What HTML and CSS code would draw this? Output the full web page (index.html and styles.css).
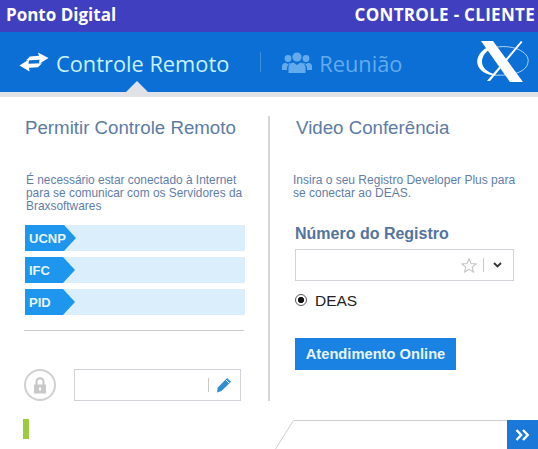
FILE: index.html
```html
<!DOCTYPE html>
<html lang="en">

<head>
    <meta charset="UTF-8">
    <meta name="viewport" content="width=device-width, initial-scale=1.0">
    <title>Ponto Digital</title>
    <link rel="stylesheet" href="styles.css">
</head>

<body>
    <header class="topbar">
        <span>Ponto Digital</span>
        <span class="topbar-right">CONTROLE - CLIENTE</span>
    </header>

    <nav class="nav">
        <svg class="nav-swap" width="30" height="20" viewBox="0 0 30 20">
            <path fill="#fff" d="M29.5 6 L19 0.5 L20 3.8 L11 4.4 L7 8.4 L20.5 7.8 L20 12 Z" />
            <path fill="#fff" d="M0.5 13.5 L10.5 19.5 L10 15.8 L19 15.2 L23 11.2 L9.5 11.8 L10 7.5 Z" />
        </svg>
        <span class="nav-item">Controle Remoto</span>
        <span class="nav-sep"></span>
        <svg class="nav-users" width="30" height="21" viewBox="0 0 30 21">
            <g fill="#64abee">
                <circle cx="15" cy="5" r="4.6" />
                <path d="M6.5 21 L6.5 15.5 Q6.5 11.5 11.5 10.5 L15 13 L18.5 10.5 Q23.5 11.5 23.5 15.5 L23.5 21 Z" />
                <circle cx="6" cy="6.5" r="3.4" />
                <path d="M0 18 L0 14.5 Q0 11.5 3.5 10.8 L6 12 L8.5 10.8 L9.5 11 Q5 12.5 5 16 L5 18 Z" />
                <circle cx="24" cy="6.5" r="3.4" />
                <path d="M30 18 L30 14.5 Q30 11.5 26.5 10.8 L24 12 L21.5 10.8 L20.5 11 Q25 12.5 25 16 L25 18 Z" />
            </g>
        </svg>
        <span class="nav-item nav-item-off">Reunião</span>
        <svg class="nav-logo" width="70" height="60" viewBox="0 0 70 60">
            <path fill="none" stroke="#a9d6f7" stroke-width="1" d="M24 16 C44 11 62 20 60 30 C59 40 44 44 30 43" />
            <path fill="#fff" d="M20 15 C10 20 6 30 12 37 C16 42 24 44 32 43.5 C22 42 14 37 14 30 C14 24 18 19 23 17 Z" />
            <path fill="#fff" d="M13 9 L25 9 L55 50 L42 50 Z" />
            <path fill="#fff" d="M53 9 L54.5 10 L22 49 L19 49 Z" />
        </svg>
    </nav>

    <div class="strip">
        <span class="strip-arrow"></span>
    </div>

    <main class="main">
        <section class="col col-left">
            <h2 class="title">Permitir Controle Remoto</h2>
            <p class="intro">É necessário estar conectado à Internet para se comunicar com os Servidores da Braxsoftwares</p>
            <div class="tag-row"><span class="tag tag-wide">UCNP</span></div>
            <div class="tag-row"><span class="tag">IFC</span></div>
            <div class="tag-row"><span class="tag">PID</span></div>
            <hr class="rule">
            <div class="lock-row">
                <span class="lock">
                    <svg width="14" height="17" viewBox="0 0 14 17">
                        <path fill="none" stroke="#c8c8c8" stroke-width="2" d="M3.5 8 L3.5 5 Q3.5 1.2 7 1.2 Q10.5 1.2 10.5 5 L10.5 8" />
                        <path fill="#c8c8c8" d="M1 7.5 L13 7.5 L13 16.5 L1 16.5 Z M6 10.5 L6 13.5 L8 13.5 L8 10.5 Z" fill-rule="evenodd" />
                    </svg>
                </span>
                <div class="box box-pass">
                    <span class="box-sep"></span>
                    <svg width="16" height="16" viewBox="0 0 16 16">
                        <path fill="#2f8fd0" d="M11 1 L15 4.8 L5.5 14 L1 15.5 L1.8 10.5 Z" />
                        <path stroke="#fff" stroke-width="1" d="M9.6 2.6 L13.4 6.4" />
                    </svg>
                </div>
            </div>
        </section>

        <section class="col col-right">
            <h2 class="title">Video Conferência</h2>
            <p class="intro">Insira o seu Registro Developer Plus para se conectar ao DEAS.</p>
            <label class="field-label">Número do Registro</label>
            <div class="box box-reg">
                <svg width="16" height="15" viewBox="0 0 16 15">
                    <path fill="none" stroke="#c4c4c4" stroke-width="1.1" d="M8 1 L10 5.6 L15 6 L11.2 9.2 L12.4 14 L8 11.4 L3.6 14 L4.8 9.2 L1 6 L6 5.6 Z" />
                </svg>
                <span class="box-sep"></span>
                <svg width="9" height="6" viewBox="0 0 9 6">
                    <path fill="none" stroke="#333" stroke-width="1.8" d="M1 1 L4.5 4.5 L8 1" />
                </svg>
            </div>
            <div class="radio-row">
                <span class="radio"></span>
                <span class="radio-text">DEAS</span>
            </div>
            <button class="btn-online">Atendimento Online</button>
        </section>
    </main>

    <footer class="footer">
        <span class="status"></span>
        <svg class="footer-slant" width="19" height="29" viewBox="0 0 19 29">
            <path fill="none" stroke="#cfcfcf" d="M18.5 0.5 L0.5 29" />
        </svg>
        <span class="footer-line"></span>
        <span class="footer-next">
            <svg width="15" height="12" viewBox="0 0 15 12">
                <path fill="none" stroke="#fff" stroke-width="2.4" d="M1.5 1 L6.2 6 L1.5 11 M8 1 L12.7 6 L8 11" />
            </svg>
        </span>
    </footer>
</body>

</html>
```
FILE: styles.css
```css
* {
    box-sizing: border-box;
}

body {
    font-family: "Liberation Sans", Arial, sans-serif;
    background-color: #fff;
    margin: 0;
    padding: 0;
    width: 538px;
    height: 449px;
    overflow: hidden;
}

.topbar {
    display: flex;
    justify-content: space-between;
    align-items: center;
    height: 32px;
    padding: 0 3px 4px 6px;
    background-color: #3f3fbf;
    color: #fff;
    font-family: "Open Sans", sans-serif;
    font-size: 17px;
    font-weight: 700;
}

.topbar-right {
    letter-spacing: 0.3px;
}

.nav {
    display: flex;
    align-items: center;
    height: 60px;
    padding-left: 19px;
    background-color: #0b6fd6;
}

.nav-swap {
    margin-right: 7px;
}

.nav-item {
    padding-top: 2px;
    font-family: "Open Sans", sans-serif;
    font-size: 21.8px;
    color: #c8f2ff;
}

.nav-item-off {
    color: #64abee;
}

.nav-sep {
    width: 1px;
    height: 20px;
    margin: 0 21px 0 31px;
    background-color: #3f8fe0;
}

.nav-users {
    margin-right: 7px;
}

.nav-logo {
    margin-left: auto;
}

.strip {
    position: relative;
    height: 5px;
    background-color: #dfe3e8;
}

.strip-arrow {
    position: absolute;
    left: 126px;
    top: -11px;
    border-left: 11px solid transparent;
    border-right: 11px solid transparent;
    border-bottom: 11px solid #dfe3e8;
}

.main {
    display: flex;
    height: 322px;
    padding: 19px 0 18px;
}

.col-left {
    width: 268px;
    padding-left: 24px;
}

.col-right {
    flex: 1;
    padding-left: 23px;
    border-left: 2px solid #d6d6d6;
}

.title {
    margin: 0;
    font-size: 18.7px;
    font-weight: 400;
    line-height: 24px;
    color: #5c7ba5;
}

.col-left .title {
    margin-left: 1px;
}

.col-right .title {
    margin-left: 3px;
}

.intro {
    margin: 33px 0 0;
    font-size: 12px;
    line-height: 13px;
    color: #5f7ea8;
}

.col-left .intro {
    margin: 34px 20px 12px 2px;
    font-size: 11.9px;
}

.col-right .intro {
    width: 230px;
    margin-top: 34px;
}

.tag-row {
    width: 220px;
    height: 26px;
    margin: 0 0 6px 1px;
    background-color: #daeefb;
}

.tag {
    display: flex;
    align-items: center;
    width: 50px;
    height: 26px;
    padding-left: 4px;
    background-color: #1e96ee;
    color: #e6f6ff;
    font-size: 13px;
    font-weight: 700;
    clip-path: polygon(0 0, 38px 0, 50px 50%, 38px 100%, 0 100%);
}

.tag-wide {
    width: 51px;
    clip-path: polygon(0 0, 39px 0, 51px 50%, 39px 100%, 0 100%);
}

.rule {
    width: 220px;
    margin: 15px 0 38px;
    border: 0;
    border-top: 1px solid #cccccc;
}

.lock-row {
    display: flex;
    align-items: center;
    gap: 18px;
}

.lock {
    display: flex;
    justify-content: center;
    align-items: center;
    width: 32px;
    height: 32px;
    border: 2px solid #d0d0d0;
    border-radius: 50%;
}

.box {
    display: flex;
    justify-content: flex-end;
    align-items: center;
    height: 32px;
    background-color: #fff;
    border: 1px solid #d2d2d8;
}

.box-pass {
    width: 167px;
    padding-right: 8px;
}

.box-pass .box-sep {
    margin-right: 7px;
}

.box-sep {
    width: 1px;
    height: 14px;
    margin: 0 9px 0 6px;
    background-color: #c8c8c8;
}

.field-label {
    display: block;
    margin: 25px 0 6px 2px;
    font-size: 16px;
    font-weight: 700;
    line-height: 18px;
    color: #54739f;
}

.box-reg {
    width: 219px;
    margin-left: 2px;
    padding-right: 11px;
}

.radio-row {
    display: flex;
    align-items: center;
    gap: 8px;
    height: 20px;
    margin: 9px 0 0 2px;
    font-size: 15.5px;
    color: #222;
}

.radio-text {
    padding-top: 2px;
}

.radio {
    width: 12px;
    height: 12px;
    border: 1px solid #555;
    border-radius: 50%;
    background: radial-gradient(circle, #111 2.8px, #fff 3.4px);
}

.btn-online {
    display: block;
    width: 161px;
    height: 32px;
    margin: 28px 0 0 2px;
    padding: 0;
    border: none;
    background-color: #1a82e2;
    color: #e6f6ff;
    font-family: inherit;
    font-size: 14.7px;
    font-weight: 700;
}

.footer {
    display: flex;
    height: 30px;
}

.status {
    width: 6px;
    height: 20px;
    margin: 0 246px 0 23px;
    background-color: #9ccc3c;
}

.footer-slant {
    margin-top: 1px;
}

.footer-line {
    flex: 1;
    margin-top: 1px;
    border-top: 1px solid #cfcfcf;
}

.footer-next {
    display: flex;
    justify-content: center;
    align-items: center;
    width: 31px;
    margin-top: 1px;
    background-color: #1a78d8;
}
```
